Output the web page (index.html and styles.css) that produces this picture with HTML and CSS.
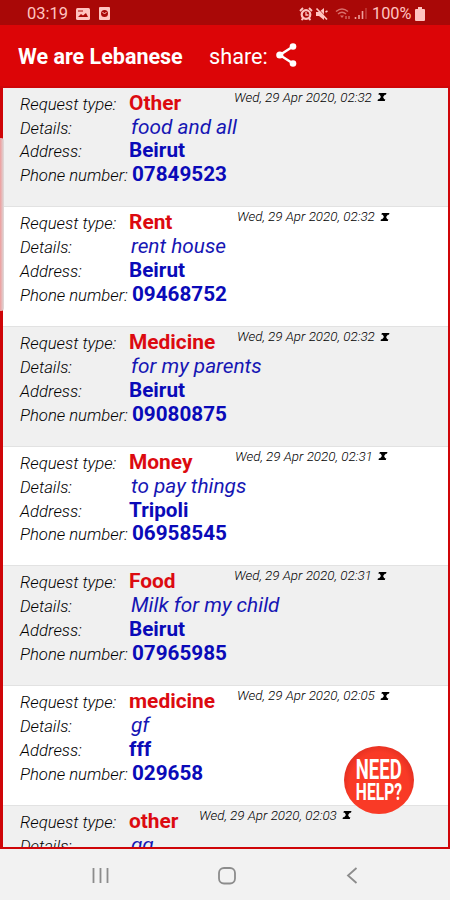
FILE: index.html
```
<!DOCTYPE html>
<html lang="en">
<head>
    <meta charset="UTF-8">
    <meta name="viewport" content="width=device-width, initial-scale=1.0">
    <title>We are Lebanese</title>
    <link rel="stylesheet" href="styles.css">
</head>
<body>
    <div class="status-bar">
        <span class="clock">03:19</span>
        <svg class="picture-icon" width="14" height="12" viewBox="0 0 14 12"><rect width="14" height="12" rx="1.500" fill="#ffc4c0"/><path d="M2 9l3-3 2 1.500 3-2.500 2 4z" fill="#a90807"/><path d="M2 3h5" stroke="#a90807"/></svg>
        <svg class="app-icon" width="11" height="13" viewBox="0 0 11 13"><rect width="11" height="13" rx="1" fill="#ffc4c0"/><circle cx="5.500" cy="6.500" r="3.500" fill="#a90807"/><path d="M3.500 5l2 2 2-2" fill="none" stroke="#ffc4c0"/></svg>
        <div class="status-right">
            <svg width="14" height="14" viewBox="0 0 14 14" fill="none" stroke="#ffc4c0"><circle cx="7" cy="7.500" r="4.300" stroke-width="2.200"/><path d="M7 5v3h2.500" stroke-width="1.300"/><path d="M1 4l3-3M13 4l-3-3M2.500 13l2-2M11.500 13l-2-2" stroke-width="1.800"/></svg>
            <svg class="mute-icon" width="13" height="14" viewBox="0 0 13 14"><path d="M1 5h3l5-4v12L4 9H1z" fill="#ffc4c0"/><path d="M2.500 1l10 10.500" stroke="#a90807"/><path d="M1.500 1.500l10.500 11M10.500 5l2-1" stroke="#ffc4c0" stroke-width="1.700"/></svg>
            <svg class="wifi-icon" width="17" height="14" viewBox="0 0 17 14" fill="none" stroke="#d9706c"><path d="M1 4.500q6-5 12 0M3 7q4-3.500 8 0" stroke-width="1.500"/><path d="M5 8.500h4l-2 2.500z" fill="#d9706c" stroke="none"/><path d="M11 9v3M14 9v3" stroke-width="1.300"/></svg>
            <svg class="signal-icon" width="13" height="13" viewBox="0 0 13 13" stroke="#efa09c" stroke-width="1.600"><path d="M1.500 12v-2M5 12V8M8.500 12V4"/><path d="M12 12V1" stroke="#c23c39"/></svg>
            <span class="battery-text">100%</span>
            <svg width="10" height="14" viewBox="0 0 10 14"><path d="M3 0h4v2h2q1 0 1 1v10q0 1-1 1H1q-1 0-1-1V3q0-1 1-1h2z" fill="#ffc4c0"/></svg>
        </div>
    </div>

    <div class="header">
        <h1>We are Lebanese</h1>
        <span class="share-label">share:</span>
        <svg class="share-icon" width="21" height="24" viewBox="0 0 21 24"><path d="M17 3.500L3.800 12l13.200 8.500" fill="none" stroke="#fff" stroke-width="2.400"/><circle cx="17" cy="3.500" r="3.300" fill="#fff"/><circle cx="3.800" cy="12" r="3.600" fill="#fff"/><circle cx="17" cy="20.500" r="3.300" fill="#fff"/></svg>
    </div>

    <div class="request-list">
        <div class="request">
            <div class="line"><span class="label">Request type:</span><span class="type">Other</span><span class="date">Wed, 29 Apr 2020, 02:32 <svg class="hourglass" viewBox="0 0 10 9"><path d="M1.500 0H10l-.5 2H8.200L6.200 4.500 7.500 7h1.200L8.200 9H0l.5-2h1.300l2-2.500L2.500 2H1z"/></svg></span></div>
            <div class="line"><span class="label">Details:</span><span class="details">food and all</span></div>
            <div class="line"><span class="label">Address:</span><span class="address">Beirut</span></div>
            <div class="line"><span class="label">Phone number:</span><span class="phone">07849523</span></div>
        </div>
        <div class="request">
            <div class="line"><span class="label">Request type:</span><span class="type">Rent</span><span class="date date-far">Wed, 29 Apr 2020, 02:32 <svg class="hourglass" viewBox="0 0 10 9"><path d="M1.500 0H10l-.5 2H8.200L6.200 4.500 7.500 7h1.200L8.200 9H0l.5-2h1.300l2-2.500L2.500 2H1z"/></svg></span></div>
            <div class="line"><span class="label">Details:</span><span class="details">rent house</span></div>
            <div class="line"><span class="label">Address:</span><span class="address">Beirut</span></div>
            <div class="line"><span class="label">Phone number:</span><span class="phone">09468752</span></div>
        </div>
        <div class="request">
            <div class="line"><span class="label">Request type:</span><span class="type">Medicine</span><span class="date date-far">Wed, 29 Apr 2020, 02:32 <svg class="hourglass" viewBox="0 0 10 9"><path d="M1.500 0H10l-.5 2H8.200L6.200 4.500 7.500 7h1.200L8.200 9H0l.5-2h1.300l2-2.500L2.500 2H1z"/></svg></span></div>
            <div class="line"><span class="label">Details:</span><span class="details">for my parents</span></div>
            <div class="line"><span class="label">Address:</span><span class="address">Beirut</span></div>
            <div class="line"><span class="label">Phone number:</span><span class="phone">09080875</span></div>
        </div>
        <div class="request">
            <div class="line"><span class="label">Request type:</span><span class="type">Money</span><span class="date date-mid">Wed, 29 Apr 2020, 02:31 <svg class="hourglass" viewBox="0 0 10 9"><path d="M1.500 0H10l-.5 2H8.200L6.200 4.500 7.500 7h1.200L8.200 9H0l.5-2h1.300l2-2.500L2.500 2H1z"/></svg></span></div>
            <div class="line"><span class="label">Details:</span><span class="details">to pay things</span></div>
            <div class="line"><span class="label">Address:</span><span class="address">Tripoli</span></div>
            <div class="line"><span class="label">Phone number:</span><span class="phone">06958545</span></div>
        </div>
        <div class="request">
            <div class="line"><span class="label">Request type:</span><span class="type">Food</span><span class="date">Wed, 29 Apr 2020, 02:31 <svg class="hourglass" viewBox="0 0 10 9"><path d="M1.500 0H10l-.5 2H8.200L6.200 4.500 7.500 7h1.200L8.200 9H0l.5-2h1.300l2-2.500L2.500 2H1z"/></svg></span></div>
            <div class="line"><span class="label">Details:</span><span class="details">Milk for my child</span></div>
            <div class="line"><span class="label">Address:</span><span class="address">Beirut</span></div>
            <div class="line"><span class="label">Phone number:</span><span class="phone">07965985</span></div>
        </div>
        <div class="request">
            <div class="line"><span class="label">Request type:</span><span class="type">medicine</span><span class="date date-far">Wed, 29 Apr 2020, 02:05 <svg class="hourglass" viewBox="0 0 10 9"><path d="M1.500 0H10l-.5 2H8.200L6.200 4.500 7.500 7h1.200L8.200 9H0l.5-2h1.300l2-2.500L2.500 2H1z"/></svg></span></div>
            <div class="line"><span class="label">Details:</span><span class="details">gf</span></div>
            <div class="line"><span class="label">Address:</span><span class="address">fff</span></div>
            <div class="line"><span class="label">Phone number:</span><span class="phone">029658</span></div>
        </div>
        <div class="request">
            <div class="line"><span class="label">Request type:</span><span class="type type-short">other</span><span class="date">Wed, 29 Apr 2020, 02:03 <svg class="hourglass" viewBox="0 0 10 9"><path d="M1.500 0H10l-.5 2H8.200L6.200 4.500 7.500 7h1.200L8.200 9H0l.5-2h1.300l2-2.500L2.500 2H1z"/></svg></span></div>
            <div class="line"><span class="label">Details:</span><span class="details">gg</span></div>
        </div>
    </div>

    <div class="edge-handle"></div>
    <div class="help-button">
        <span class="need">NEED</span>
        <span class="help">HELP?</span>
    </div>

    <div class="nav-bar">
        <svg width="18" height="17" viewBox="0 0 18 17" stroke="#8c8c8c" stroke-width="1.800"><path d="M2.500 1v15M9.500 1v15M16.500 1v15"/></svg>
        <svg width="20" height="18" viewBox="0 0 20 18"><rect x="1" y="1" width="16" height="15.500" rx="5" fill="none" stroke="#8c8c8c" stroke-width="1.800"/></svg>
        <svg width="12" height="17" viewBox="0 0 12 17"><path d="M10.500 1L2 8.500l8.500 7.500" fill="none" stroke="#8c8c8c" stroke-width="1.800"/></svg>
    </div>
</body>
</html>
```
FILE: styles.css
```
* {
    box-sizing: border-box;
}

body {
    width: 450px;
    height: 900px;
    margin: 0;
    overflow: hidden;
    position: relative;
    font-family: Roboto, sans-serif;
    background: #f2f2f2;
}

svg {
    display: block;
    flex-shrink: 0;
}

.status-bar {
    display: flex;
    align-items: center;
    height: 25px;
    padding: 2px 25px 0 27px;
    background: #a90807;
    color: #ffc4c0;
}

.clock {
    width: 49px;
    font-size: 16.5px;
}

.app-icon {
    margin-left: 9px;
}

.status-right {
    display: flex;
    align-items: center;
    margin-left: auto;
}

.mute-icon {
    margin-left: 2px;
}

.wifi-icon {
    margin-left: 7px;
}

.signal-icon {
    margin-left: 2px;
}

.battery-text {
    width: 43px;
    margin-left: 5px;
    font-size: 16.3px;
}

.header {
    display: flex;
    align-items: center;
    height: 61px;
    padding: 2px 18px 0;
    background: #dc0507;
    color: #fff;
}

.header h1 {
    width: 191px;
    margin: 0;
    font-size: 21.5px;
    font-weight: bold;
    white-space: nowrap;
}

.share-label {
    width: 67px;
    font-size: 21.7px;
}

.share-icon {
    margin-top: -3px;
}

.request-list {
    height: 763px;
    overflow: hidden;
    border: solid #cf0508;
    border-width: 2px 2px 2px 3px;
}

.request {
    height: 119.7px;
    padding: 3px 0 0 17px;
    background: #fff;
    border-bottom: 1px solid #e2e2e2;
}

.request:nth-child(odd) {
    background: #f0f0f0;
}

/* the first row is scrolled slightly under the header */
.request:first-child {
    height: 119.4px;
    padding-top: 2.7px;
}

.line {
    display: flex;
    align-items: baseline;
    height: 23.9px;
    line-height: 25px;
    white-space: nowrap;
}

.label {
    width: 109px;
    font-size: 16.7px;
    font-weight: 300;
    font-style: italic;
    color: #000;
}

.type {
    width: 105px;
    font-size: 20.9px;
    font-weight: bold;
    color: #dc0a10;
}

.type-short {
    width: 70px;
}

.details {
    padding-left: 2px;
    font-size: 20.8px;
    font-style: italic;
    color: #1616b4;
}

.address,
.phone {
    font-size: 20.7px;
    font-weight: bold;
    color: #0a0ab8;
}

.phone {
    padding-left: 3px;
}

.date {
    display: flex;
    align-items: center;
    align-self: flex-start;
    height: 13px;
    font-size: 13.4px;
    font-weight: 300;
    font-style: italic;
    color: #000;
}

.date-mid {
    margin-left: 1px;
}

.date-far {
    margin-left: 3px;
}

.hourglass {
    width: 10px;
    height: 8px;
    margin-left: 5px;
}

.edge-handle {
    position: absolute;
    left: 0;
    top: 138px;
    width: 4px;
    height: 173px;
    border-radius: 0 3px 3px 0;
    background: linear-gradient(to right, #ee9c9c, #ddd);
}

.help-button {
    position: absolute;
    left: 344px;
    top: 746px;
    width: 70px;
    height: 68px;
    display: flex;
    flex-direction: column;
    align-items: center;
    padding-top: 9px;
    border-radius: 50%;
    background: radial-gradient(ellipse at 50% 62%, #f93a26 60%, #c9231c 92%);
    color: #fff;
    font-weight: bold;
}

.need {
    font-size: 28px;
    line-height: 30px;
    transform: scaleX(0.66);
}

.help {
    margin-top: -6px;
    font-size: 23px;
    line-height: 27px;
    transform: scaleX(0.68);
}

.nav-bar {
    display: flex;
    align-items: center;
    justify-content: space-between;
    height: 50px;
    padding: 3px 92px 0 91px;
    background: #f2f2f2;
}
```
